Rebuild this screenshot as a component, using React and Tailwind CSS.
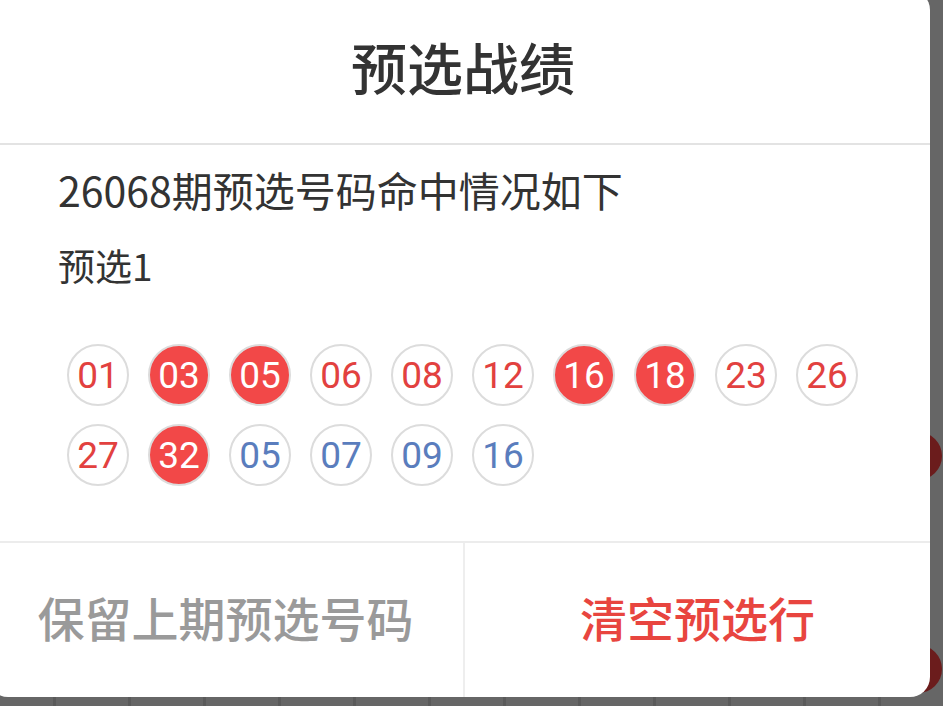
import React from 'react';

const balls = [
  { n: '01', type: 'red' },
  { n: '03', type: 'hit' },
  { n: '05', type: 'hit' },
  { n: '06', type: 'red' },
  { n: '08', type: 'red' },
  { n: '12', type: 'red' },
  { n: '16', type: 'hit' },
  { n: '18', type: 'hit' },
  { n: '23', type: 'red' },
  { n: '26', type: 'red' },
  { n: '27', type: 'red' },
  { n: '32', type: 'hit' },
  { n: '05', type: 'blue' },
  { n: '07', type: 'blue' },
  { n: '09', type: 'blue' },
  { n: '16', type: 'blue' },
];

const ballStyle = {
  red: 'bg-white text-[#e2413f]',
  blue: 'bg-white text-[#5a7dbd]',
  hit: 'bg-[#f24848] text-white',
};

const Ball = ({ n, type }) => (
  <div
    className={`w-[62px] h-[62px] rounded-full border-2 border-[#dcdcdc] flex items-center justify-center text-[37px] leading-none ${ballStyle[type]}`}
    style={{ fontFamily: 'Roboto, "Noto Sans", sans-serif' }}
  >
    {n}
  </div>
);

const App = () => {
  const cols = Array.from({ length: 13 });
  return (
    <div
      className="relative w-[943px] h-[706px] overflow-hidden bg-[#666666]"
      style={{ fontFamily: '"Noto Sans CJK SC", "Noto Sans", sans-serif' }}
    >
      {/* table behind the overlay */}
      <div className="absolute inset-0 flex pl-[53px]">
        {cols.map((_, i) => (
          <div key={i} className="w-[75px] shrink-0 border-l-[3px] border-[#5a5a5a]" />
        ))}
      </div>
      <div className="absolute left-[894px] top-[432px] w-[48px] h-[48px] rounded-full bg-[#6b1c1c]" />
      <div className="absolute left-[894px] top-[645px] w-[48px] h-[48px] rounded-full bg-[#6b1c1c]" />

      {/* dialog */}
      <div className="relative -mt-[10px] -ml-[12px] w-[942px] h-[707px] rounded-[20px] bg-white flex flex-col">
        <div className="h-[155px] shrink-0 flex items-center justify-center border-b-2 border-[#e3e3e3]">
          <span className="text-[56px] font-medium text-[#333333] leading-none pl-[8px] pb-[2px]">预选战绩</span>
        </div>

        <div className="h-[398px] shrink-0 pl-[70px] pt-[20px] border-b-2 border-[#ececec]">
          <div className="text-[41px] leading-[48px] text-[#333333]">26068期预选号码命中情况如下</div>
          <div className="mt-[30px] text-[37px] leading-[44px] text-[#333333]">预选1</div>
          <div className="mt-[57px] ml-[9px] grid grid-cols-[repeat(10,62px)] gap-x-[19px] gap-y-[18px]">
            {balls.map((b, i) => (
              <Ball key={i} n={b.n} type={b.type} />
            ))}
          </div>
        </div>

        <div className="flex-1 flex">
          <button className="w-[477px] flex items-center justify-center border-r-2 border-[#eeeeee] text-[47px] font-medium text-[#9a9a9a] pb-[5px]">
            保留上期预选号码
          </button>
          <button className="flex-1 flex items-center justify-center text-[47px] font-medium text-[#e8453f] pb-[5px]">
            清空预选行
          </button>
        </div>
      </div>
    </div>
  );
};

export default App;
